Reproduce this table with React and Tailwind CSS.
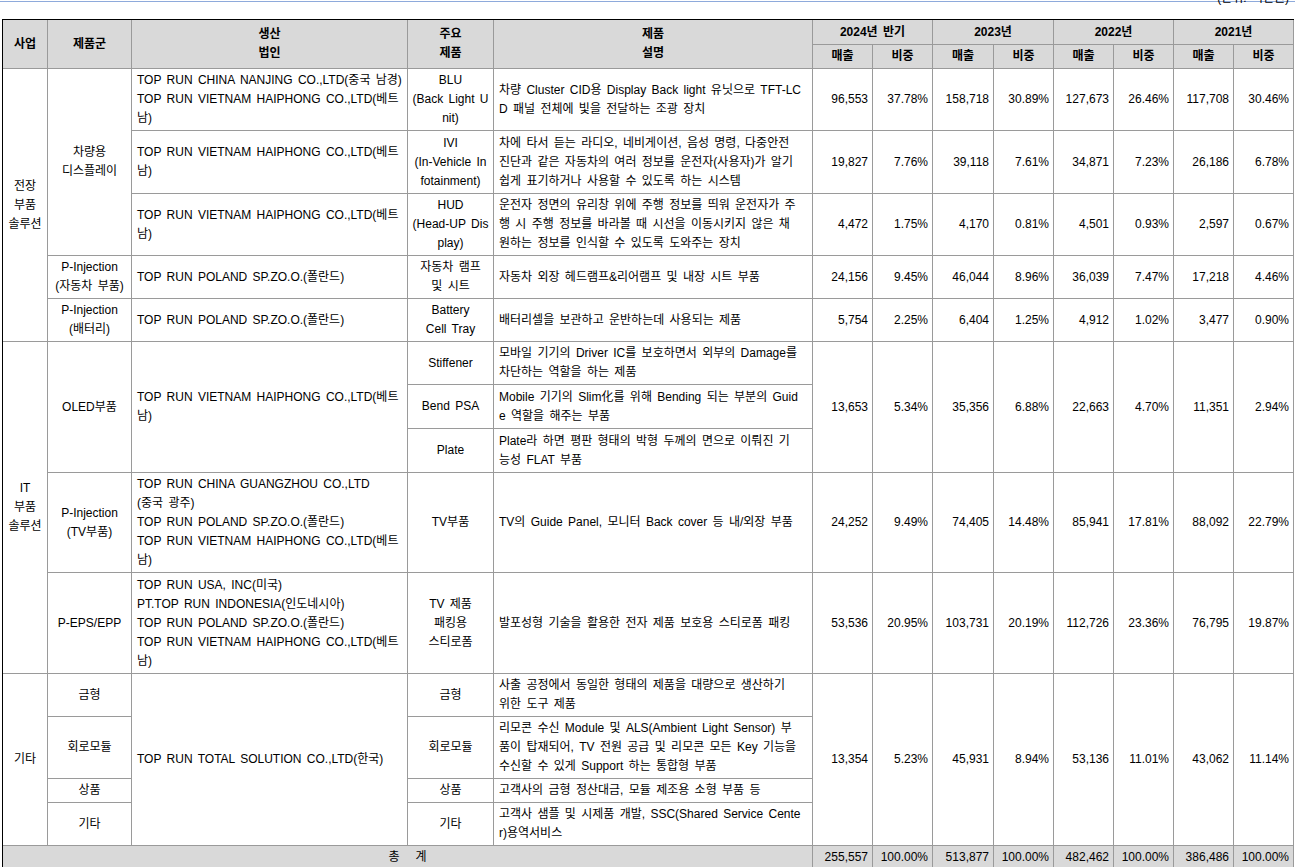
import React from "react";

const font = "font-['Liberation_Sans','Noto_Sans_CJK_KR',sans-serif]";

const lines = (text) =>
  text.split("\n").map((t, i, arr) => (
    <React.Fragment key={i}>
      {t}
      {i < arr.length - 1 && <br />}
    </React.Fragment>
  ));

const cell =
  "border-r border-b border-[#9a9a9a] align-middle leading-[19px] whitespace-nowrap overflow-hidden py-[2px]";

const C = ({ children, rs, cs, className = "" }) => (
  <td rowSpan={rs} colSpan={cs} className={`${cell} text-center px-[2px] ${className}`}>
    {typeof children === "string" ? lines(children) : children}
  </td>
);

const L = ({ children, rs }) => (
  <td rowSpan={rs} className={`${cell} text-left pl-[5px] pr-[2px]`}>
    {lines(children)}
  </td>
);

const Nums = ({ values, rs }) =>
  values.map((v, i) => (
    <td key={i} rowSpan={rs} className={`${cell} text-right pr-[4px]`}>
      {v}
    </td>
  ));

const TH = ({ children, rs, cs }) => (
  <th
    rowSpan={rs}
    colSpan={cs}
    className="border-r border-b border-[#9a9a9a] bg-[#d9d9d9] font-bold text-center align-middle leading-[19px] py-[2px] whitespace-nowrap"
  >
    {lines(children)}
  </th>
);

const VIET = "TOP RUN VIETNAM HAIPHONG CO.,LTD(베트\n남)";
const POLAND = "TOP RUN POLAND SP.ZO.O.(폴란드)";

export default function App() {
  return (
    <div className={`${font} text-[12px] text-black bg-white min-h-screen [word-spacing:2px]`}>
      {/* unit caption */}
      <div className="h-[19px] overflow-hidden">
        <div className="h-px mt-px bg-[#8eaadb]" />
        <div className="-mt-[13px] text-right pr-[6px] leading-[19px]">(단위: 백만원)</div>
      </div>

      <div className="pl-[2px]">
        <table className="table-fixed border-separate border-spacing-0 border-t border-l border-black w-[1292px]">
          <colgroup>
            <col className="w-[45px]" />
            <col className="w-[84px]" />
            <col className="w-[276px]" />
            <col className="w-[86px]" />
            <col className="w-[319px]" />
            <col className="w-[60px]" />
            <col className="w-[60px]" />
            <col className="w-[61px]" />
            <col className="w-[60px]" />
            <col className="w-[60px]" />
            <col className="w-[60px]" />
            <col className="w-[60px]" />
            <col className="w-[60px]" />
          </colgroup>
          <thead>
            <tr className="h-[25px]">
              <TH rs={2}>사업</TH>
              <TH rs={2}>제품군</TH>
              <TH rs={2}>{"생산\n법인"}</TH>
              <TH rs={2}>{"주요\n제품"}</TH>
              <TH rs={2}>{"제품\n설명"}</TH>
              <TH cs={2}>2024년 반기</TH>
              <TH cs={2}>2023년</TH>
              <TH cs={2}>2022년</TH>
              <TH cs={2}>2021년</TH>
            </tr>
            <tr className="h-[24px]">
              <TH>매출</TH>
              <TH>비중</TH>
              <TH>매출</TH>
              <TH>비중</TH>
              <TH>매출</TH>
              <TH>비중</TH>
              <TH>매출</TH>
              <TH>비중</TH>
            </tr>
          </thead>
          <tbody>
            {/* 전장부품솔루션 */}
            <tr className="h-[62px]">
              <C rs={5}>{"전장\n부품\n솔루션"}</C>
              <C rs={3}>{"차량용\n디스플레이"}</C>
              <L>{"TOP RUN CHINA NANJING CO.,LTD(중국 남경)\nTOP RUN VIETNAM HAIPHONG CO.,LTD(베트\n남)"}</L>
              <C>{"BLU\n(Back Light U\nnit)"}</C>
              <L>{"차량 Cluster CID용 Display Back light 유닛으로 TFT-LC\nD 패널 전체에 빛을 전달하는 조광 장치"}</L>
              <Nums values={["96,553", "37.78%", "158,718", "30.89%", "127,673", "26.46%", "117,708", "30.46%"]} />
            </tr>
            <tr className="h-[63px]">
              <L>{VIET}</L>
              <C>{"IVI\n(In-Vehicle In\nfotainment)"}</C>
              <L>{"차에 타서 듣는 라디오, 네비게이션, 음성 명령, 다중안전\n진단과 같은 자동차의 여러 정보를 운전자(사용자)가 알기\n쉽게 표기하거나 사용할 수 있도록 하는 시스템"}</L>
              <Nums values={["19,827", "7.76%", "39,118", "7.61%", "34,871", "7.23%", "26,186", "6.78%"]} />
            </tr>
            <tr className="h-[62px]">
              <L>{VIET}</L>
              <C>{"HUD\n(Head-UP Dis\nplay)"}</C>
              <L>{"운전자 정면의 유리창 위에 주행 정보를 띄워 운전자가 주\n행 시 주행 정보를 바라볼 때 시선을 이동시키지 않은 채\n원하는 정보를 인식할 수 있도록 도와주는 장치"}</L>
              <Nums values={["4,472", "1.75%", "4,170", "0.81%", "4,501", "0.93%", "2,597", "0.67%"]} />
            </tr>
            <tr className="h-[43px]">
              <C>{"P-Injection\n(자동차 부품)"}</C>
              <L>{POLAND}</L>
              <C>{"자동차 램프\n및 시트"}</C>
              <L>자동차 외장 헤드램프&리어램프 및 내장 시트 부품</L>
              <Nums values={["24,156", "9.45%", "46,044", "8.96%", "36,039", "7.47%", "17,218", "4.46%"]} />
            </tr>
            <tr className="h-[43px]">
              <C>{"P-Injection\n(배터리)"}</C>
              <L>{POLAND}</L>
              <C>{"Battery\nCell Tray"}</C>
              <L>배터리셀을 보관하고 운반하는데 사용되는 제품</L>
              <Nums values={["5,754", "2.25%", "6,404", "1.25%", "4,912", "1.02%", "3,477", "0.90%"]} />
            </tr>

            {/* IT부품솔루션 */}
            <tr className="h-[43px]">
              <C rs={5}>{"IT\n부품\n솔루션"}</C>
              <C rs={3}>OLED부품</C>
              <L rs={3}>{VIET}</L>
              <C>Stiffener</C>
              <L>{"모바일 기기의 Driver IC를 보호하면서 외부의 Damage를\n차단하는 역할을 하는 제품"}</L>
              <Nums rs={3} values={["13,653", "5.34%", "35,356", "6.88%", "22,663", "4.70%", "11,351", "2.94%"]} />
            </tr>
            <tr className="h-[44px]">
              <C>Bend PSA</C>
              <L>{"Mobile 기기의 Slim化를 위해 Bending 되는 부분의 Guid\ne 역할을 해주는 부품"}</L>
            </tr>
            <tr className="h-[44px]">
              <C>Plate</C>
              <L>{"Plate라 하면 평판 형태의 박형 두께의 면으로 이뤄진 기\n능성 FLAT 부품"}</L>
            </tr>
            <tr className="h-[99px]">
              <C>{"P-Injection\n(TV부품)"}</C>
              <L>{"TOP RUN CHINA GUANGZHOU CO.,LTD\n(중국 광주)\n" + POLAND + "\n" + VIET}</L>
              <C>TV부품</C>
              <L>TV의 Guide Panel, 모니터 Back cover 등 내/외장 부품</L>
              <Nums values={["24,252", "9.49%", "74,405", "14.48%", "85,941", "17.81%", "88,092", "22.79%"]} />
            </tr>
            <tr className="h-[101px]">
              <C>P-EPS/EPP</C>
              <L>{"TOP RUN USA, INC(미국)\nPT.TOP RUN INDONESIA(인도네시아)\n" + POLAND + "\n" + VIET}</L>
              <C>{"TV 제품\n패킹용\n스티로폼"}</C>
              <L>발포성형 기술을 활용한 전자 제품 보호용 스티로폼 패킹</L>
              <Nums values={["53,536", "20.95%", "103,731", "20.19%", "112,726", "23.36%", "76,795", "19.87%"]} />
            </tr>

            {/* 기타 */}
            <tr className="h-[43px]">
              <C rs={4}>기타</C>
              <C>금형</C>
              <L rs={4}>TOP RUN TOTAL SOLUTION CO.,LTD(한국)</L>
              <C>금형</C>
              <L>{"사출 공정에서 동일한 형태의 제품을 대량으로 생산하기\n위한 도구 제품"}</L>
              <Nums rs={4} values={["13,354", "5.23%", "45,931", "8.94%", "53,136", "11.01%", "43,062", "11.14%"]} />
            </tr>
            <tr className="h-[62px]">
              <C>회로모듈</C>
              <C>회로모듈</C>
              <L>{"리모콘 수신 Module 및 ALS(Ambient Light Sensor) 부\n품이 탑재되어, TV 전원 공급 및 리모콘 모든 Key 기능을\n수신할 수 있게 Support 하는 통합형 부품"}</L>
            </tr>
            <tr className="h-[24px]">
              <C>상품</C>
              <C>상품</C>
              <L>고객사의 금형 정산대금, 모듈 제조용 소형 부품 등</L>
            </tr>
            <tr className="h-[42px]">
              <C>기타</C>
              <C>기타</C>
              <L>{"고객사 샘플 및 시제품 개발, SSC(Shared Service Cente\nr)용역서비스"}</L>
            </tr>

            {/* 총계 */}
            <tr className="h-[24px] bg-[#d9d9d9]">
              <C cs={5}>
                <span>총</span>
                <span className="ml-[16px]">계</span>
              </C>
              <Nums values={["255,557", "100.00%", "513,877", "100.00%", "482,462", "100.00%", "386,486", "100.00%"]} />
            </tr>
          </tbody>
        </table>
      </div>
    </div>
  );
}
